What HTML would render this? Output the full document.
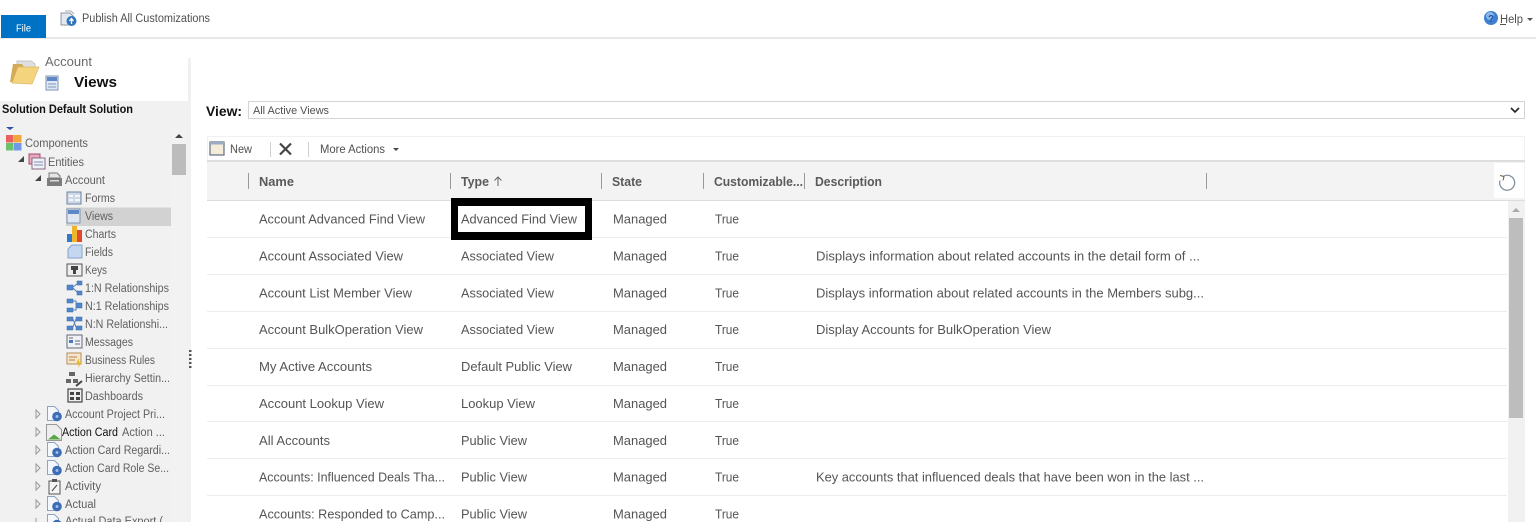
<!DOCTYPE html>
<html><head><meta charset="utf-8"><style>
html,body{margin:0;padding:0;background:#fff;overflow:hidden;width:1536px;height:522px}
svg{display:block;filter:blur(.35px)}
text{font-family:"Liberation Sans",sans-serif;font-size:12.5px;fill:#505050}
.t text{fill:#555}
.h text{font-weight:bold;fill:#5a5a5a;font-size:12.5px}
.n text{font-size:11.5px;fill:#606060}
</style></head><body>
<svg width="1536" height="522" viewBox="0 0 1536 522" xmlns="http://www.w3.org/2000/svg">
<!-- top bar -->
<rect x="0" y="37" width="1536" height="2" fill="#e8e8e8"/>
<rect x="1" y="15" width="45" height="23" fill="#0072c6"/>
<text x="16" y="31.500" textLength="15" lengthAdjust="spacingAndGlyphs" style="fill:#fff;font-size:10.500px">File</text>
<path d="M61 13h9l4 4v8H61z" fill="#e4e8ee" stroke="#8c98a6"/><path d="M65 11h6l3 3" fill="none" stroke="#a5aeb9"/>
<circle cx="71.500" cy="21" r="5" fill="#2f75bb"/><path d="M71.500 24v-5M69.500 21l2-2.500 2 2.500" stroke="#fff" stroke-width="1.300" fill="none"/>
<text x="82" y="22" textLength="128" lengthAdjust="spacingAndGlyphs" style="font-size:11.500px;fill:#505050">Publish All Customizations</text>
<circle cx="1491" cy="18" r="7" fill="#3f7fd0"/><circle cx="1490" cy="16" r="4" fill="#8db7e8"/><text x="1488" y="22" style="font-size:10px;font-weight:bold;fill:#1f4f9c">?</text>
<text x="1500" y="23" textLength="23" lengthAdjust="spacingAndGlyphs" style="font-size:11.500px;fill:#505050">Help</text>
<rect x="1500" y="24" width="6" height="1" fill="#555"/>
<path d="M1527 18h6l-3 3z" fill="#555"/>

<!-- left panel -->
<rect x="188" y="58" width="3" height="43" fill="#f0f0f0"/>
<rect x="0" y="101" width="191" height="421" fill="#f1f1f1"/>
<rect x="171" y="126" width="16" height="396" fill="#f2f2f2"/>
<path d="M175 138h8l-4-4z" fill="#444"/>
<rect x="172" y="144" width="14" height="31" fill="#bcbcbc"/>
<g fill="#555"><rect x="189" y="350" width="2.500" height="2"/><rect x="189" y="354" width="2.500" height="2"/><rect x="189" y="358" width="2.500" height="2"/><rect x="189" y="362" width="2.500" height="2"/><rect x="189" y="366" width="2.500" height="2"/></g>
<!-- folder -->
<path d="M17 61h14l4 3v12H17z" fill="#e0e0e0" stroke="#c4c4c4"/>
<path d="M10 82l3-18h9l2 3h4l-1 15z" fill="#d3aa55"/>
<path d="M12 83l6-16h21l-7 17z" fill="#f5d47e" stroke="#dcb864" stroke-width=".7"/>
<text x="45" y="66" textLength="47" lengthAdjust="spacingAndGlyphs" style="font-size:12.500px;fill:#6a6a6a">Account</text>
<rect x="46" y="76" width="12" height="14" fill="#dfe7f2" stroke="#7f95b5"/><rect x="47" y="77" width="10" height="4" fill="#5d88c4"/>
<path d="M48 84h8M48 87h8" stroke="#7f95b5"/>
<text x="74" y="87" textLength="43" lengthAdjust="spacingAndGlyphs" style="font-size:15px;font-weight:bold;fill:#111">Views</text>
<text x="2" y="113" textLength="131" lengthAdjust="spacingAndGlyphs" style="font-size:11.500px;font-weight:bold;fill:#111">Solution Default Solution</text>

<!-- tree -->
<path d="M6 127h8l-4 3z" fill="#2a4fa5"/>
<rect x="6" y="135" width="7.500" height="7.500" fill="#ea5f5f"/><rect x="14" y="135" width="7.500" height="7.500" fill="#f0a63c"/>
<rect x="6" y="143" width="7.500" height="7.500" fill="#6cc06c"/><rect x="14" y="143" width="7.500" height="7.500" fill="#6f9be6"/>
<path d="M24 156l-6 6h6z" fill="#444"/>
<rect x="29" y="154" width="11" height="10" fill="#e8a8bd" stroke="#a34a6c"/><rect x="32" y="158" width="13" height="11" fill="#eef1f6" stroke="#8c6a84"/><path d="M34 162h9M34 165h9" stroke="#7f8fb0"/>
<path d="M41 175l-6 6h6z" fill="#444"/>
<path d="M49 178v-5h8l3 3v2z" fill="#e6e6e6" stroke="#777"/><rect x="47" y="178" width="15" height="8" fill="#7c7c7c"/><rect x="50" y="180" width="9" height="1.500" fill="#ddd"/>

<rect x="66" y="207.500" width="105" height="18.500" fill="#d2d2d2"/>
<g class="n">
<text x="25" y="147" textLength="63" lengthAdjust="spacingAndGlyphs">Components</text>
<text x="48" y="166" textLength="36" lengthAdjust="spacingAndGlyphs">Entities</text>
<text x="65" y="184" textLength="40" lengthAdjust="spacingAndGlyphs">Account</text>
<text x="85" y="202" textLength="30" lengthAdjust="spacingAndGlyphs">Forms</text>
<text x="85" y="220" textLength="28" lengthAdjust="spacingAndGlyphs">Views</text>
<text x="85" y="238" textLength="31" lengthAdjust="spacingAndGlyphs">Charts</text>
<text x="85" y="256" textLength="28" lengthAdjust="spacingAndGlyphs">Fields</text>
<text x="85" y="274" textLength="22" lengthAdjust="spacingAndGlyphs">Keys</text>
<text x="85" y="292" textLength="84" lengthAdjust="spacingAndGlyphs">1:N Relationships</text>
<text x="85" y="310" textLength="84" lengthAdjust="spacingAndGlyphs">N:1 Relationships</text>
<text x="85" y="328" textLength="83" lengthAdjust="spacingAndGlyphs">N:N Relationshi...</text>
<text x="85" y="346" textLength="48" lengthAdjust="spacingAndGlyphs">Messages</text>
<text x="85" y="364" textLength="70" lengthAdjust="spacingAndGlyphs">Business Rules</text>
<text x="85" y="382" textLength="85" lengthAdjust="spacingAndGlyphs">Hierarchy Settin...</text>
<text x="85" y="400" textLength="58" lengthAdjust="spacingAndGlyphs">Dashboards</text>
<text x="65" y="418" textLength="100" lengthAdjust="spacingAndGlyphs">Account Project Pri...</text>
<text x="62" y="436" textLength="56" lengthAdjust="spacingAndGlyphs" style="fill:#111">Action Card</text>
<text x="122" y="436" textLength="43" lengthAdjust="spacingAndGlyphs">Action ...</text>
<text x="65" y="454" textLength="105" lengthAdjust="spacingAndGlyphs">Action Card Regardi...</text>
<text x="65" y="472" textLength="104" lengthAdjust="spacingAndGlyphs">Action Card Role Se...</text>
<text x="65" y="490" textLength="36" lengthAdjust="spacingAndGlyphs">Activity</text>
<text x="65" y="508" textLength="31" lengthAdjust="spacingAndGlyphs">Actual</text>
<text x="65" y="525" textLength="98" lengthAdjust="spacingAndGlyphs">Actual Data Export (</text>
</g>
<!-- tree icons -->
<rect x="67" y="192" width="14" height="12" fill="#cfd8e6" stroke="#6d85a8"/><path d="M69 196h4M75 196h5M69 200h4M75 200h5" stroke="#fff" stroke-width="1.500"/>
<rect x="67" y="209" width="13" height="14" fill="#dfe7f2" stroke="#7f95b5"/><rect x="68" y="210" width="11" height="4" fill="#5d88c4"/>
<rect x="67" y="234" width="5" height="8" fill="#2f7ac6"/><rect x="72" y="226" width="5" height="16" fill="#f0b429"/><rect x="77" y="230" width="5" height="12" fill="#e2492c"/>
<path d="M68 249l4-4h10v13H68z" fill="#c5d6ef" stroke="#88a3cc"/>
<rect x="67" y="264" width="15" height="12" fill="#eee" stroke="#555"/><path d="M71 266h7v4h-2v4h-3v-4h-2z" fill="#444"/>
<g fill="#4f86cc" stroke="#3c6aa8" stroke-width=".5">
<rect x="67" y="285" width="6" height="5"/><rect x="77" y="281" width="5" height="4"/><rect x="77" y="291" width="5" height="4"/>
<rect x="67" y="299" width="6" height="4"/><rect x="67" y="308" width="6" height="4"/><rect x="76" y="303" width="6" height="5"/>
<rect x="67" y="317" width="6" height="4"/><rect x="76" y="317" width="6" height="4"/><rect x="67" y="326" width="6" height="4"/><rect x="76" y="326" width="6" height="4"/>
</g>
<path d="M73 287l4-3M73 288l4 4M73 301h3v4M73 310h3v-4M73 319l3 8M76 319l-3 8" stroke="#5a7fb0" fill="none"/>
<rect x="67" y="335" width="15" height="13" fill="#eef1f6" stroke="#667"/><path d="M69 338h4M75 341h5M75 344h5" stroke="#667"/><rect x="69" y="340" width="4" height="3" fill="#4a78b8"/>
<rect x="67" y="353" width="14" height="11" fill="#f3e6cf" stroke="#b98a55"/><path d="M69 357h8M69 360h6" stroke="#c27a3b"/><path d="M79 358l-3 6h3l-1 4 4-6h-3z" fill="#e5b92c"/>
<rect x="69" y="372" width="6" height="4" fill="#666"/><rect x="66" y="379" width="5" height="4" fill="#666"/><rect x="73" y="379" width="5" height="4" fill="#666"/><path d="M76 386l6-5" stroke="#444" stroke-width="2"/>
<rect x="68" y="389" width="14" height="13" fill="#eee" stroke="#444" stroke-width="1.200"/><path d="M70 392h4v3h-4zM76 392h4v3h-4zM70 397h4v3h-4zM76 397h4v3h-4z" fill="#444"/>
<g fill="none" stroke="#999"><path d="M36 410v8l4-4zM36 428v8l4-4zM36 446v8l4-4zM36 464v8l4-4zM36 482v8l4-4zM36 500v8l4-4zM36 518v8"/></g>
<g>
<path d="M47.500 406.500h7l4 4v10h-11z" fill="#f4f7fb" stroke="#8fa3c2"/><circle cx="57" cy="416.500" r="4.800" fill="#3c6cb4"/><circle cx="57" cy="416.500" r="1.500" fill="#9fbbe4"/>
<path d="M46.500 424.500h10l5 5v11h-15z" fill="#eee" stroke="#999"/><path d="M48 439.500l6-5 7 5z" fill="#5aa845"/>
<path d="M47.500 442.500h7l4 4v10h-11z" fill="#f4f7fb" stroke="#8fa3c2"/><circle cx="57" cy="452.500" r="4.800" fill="#3c6cb4"/><circle cx="57" cy="452.500" r="1.500" fill="#9fbbe4"/>
<path d="M47.500 460.500h7l4 4v10h-11z" fill="#f4f7fb" stroke="#8fa3c2"/><circle cx="57" cy="470.500" r="4.800" fill="#3c6cb4"/><circle cx="57" cy="470.500" r="1.500" fill="#9fbbe4"/>
<rect x="49" y="481" width="11" height="13" fill="#f4f4f4" stroke="#555"/><rect x="52" y="479" width="5" height="3" fill="#555"/><path d="M52 491l5-6" stroke="#444"/>
<path d="M47.500 496.500h7l4 4v10h-11z" fill="#f4f7fb" stroke="#8fa3c2"/><circle cx="57" cy="506.500" r="4.800" fill="#3c6cb4"/><circle cx="57" cy="506.500" r="1.500" fill="#9fbbe4"/>
<path d="M47.500 514.500h7l4 4v10h-11z" fill="#f4f7fb" stroke="#8fa3c2"/><circle cx="57" cy="524.500" r="4.800" fill="#3c6cb4"/>
</g>

<!-- view selector -->
<text x="206" y="116" textLength="36" lengthAdjust="spacingAndGlyphs" style="font-size:14px;font-weight:bold;fill:#111">View:</text>
<rect x="248.500" y="101.500" width="1276" height="17" fill="#fff" stroke="#d4d4d4"/>
<text x="253" y="114" textLength="76" lengthAdjust="spacingAndGlyphs" style="font-size:11px;fill:#505050">All Active Views</text>
<path d="M1511 108l4 4 4-4" fill="none" stroke="#222" stroke-width="1.600"/>

<!-- toolbar -->
<rect x="207.500" y="136.500" width="1317" height="25" fill="#fff" stroke="#f0f0f0"/>
<rect x="210" y="142" width="14" height="13" fill="#f3ecd8" stroke="#5f6f85" stroke-width="1.200"/><rect x="210" y="142" width="14" height="2.500" fill="#9aacc2"/>
<text x="230" y="153" textLength="22" lengthAdjust="spacingAndGlyphs" style="font-size:11.500px;fill:#505050">New</text>
<rect x="270" y="142" width="1" height="15" fill="#d0d0d0"/>
<path d="M280 143.500l11 11M291 143.500l-11 11" stroke="#444" stroke-width="2.200"/>
<rect x="308" y="142" width="1" height="15" fill="#d0d0d0"/>
<text x="320" y="153" textLength="65" lengthAdjust="spacingAndGlyphs" style="font-size:11.500px;fill:#505050">More Actions</text>
<path d="M393 148h6l-3 3z" fill="#444"/>

<!-- header -->
<rect x="207" y="160" width="1318" height="2" fill="#dedede"/>
<rect x="207" y="162" width="1318" height="38" fill="#f3f3f3"/>
<rect x="207" y="200" width="1318" height="1" fill="#dcdcdc"/>
<rect x="1494" y="163" width="30" height="35" fill="#fff"/>
<path d="M1503 176.500a7.500 7.500 0 1 1-3 4" fill="none" stroke="#7d8a99" stroke-width="1.200"/><path d="M1500 175.500l4 1-1 4" fill="none" stroke="#7a5a3a"/>
<g fill="#999">
<rect x="248" y="173" width="1" height="16"/><rect x="450" y="173" width="1" height="16"/><rect x="601" y="173" width="1" height="16"/><rect x="703" y="173" width="1" height="16"/><rect x="804" y="173" width="1" height="16"/><rect x="1206" y="173" width="1" height="16"/>
</g>
<g class="h">
<text x="259" y="186" textLength="35" lengthAdjust="spacingAndGlyphs">Name</text>
<text x="461" y="186" textLength="28" lengthAdjust="spacingAndGlyphs">Type</text>
<text x="612" y="186" textLength="30" lengthAdjust="spacingAndGlyphs">State</text>
<text x="714" y="186" textLength="89" lengthAdjust="spacingAndGlyphs">Customizable...</text>
<text x="815" y="186" textLength="67" lengthAdjust="spacingAndGlyphs">Description</text>
</g>
<path d="M498 186v-9M494.500 180.500l3.500-3.500 3.500 3.500" fill="none" stroke="#666" stroke-width="1"/>

<!-- row lines -->
<g fill="#ececec">
<rect x="207" y="237" width="1300" height="1"/><rect x="207" y="274" width="1300" height="1"/><rect x="207" y="311" width="1300" height="1"/><rect x="207" y="348" width="1300" height="1"/><rect x="207" y="385" width="1300" height="1"/><rect x="207" y="421" width="1300" height="1"/><rect x="207" y="458" width="1300" height="1"/><rect x="207" y="495" width="1300" height="1"/>
</g>
<!-- scrollbar -->
<rect x="1508" y="201" width="17" height="321" fill="#f1f1f1"/>
<path d="M1512 212h8l-4-4z" fill="#aaa"/>
<rect x="1509" y="218" width="14" height="200" fill="#bdbdbd"/>
<!-- highlight -->
<rect x="451" y="198" width="141" height="42" fill="#000"/>
<rect x="458" y="206" width="127" height="26" fill="#fff"/>

<g class="t">
<text x="259" y="223.500" textLength="166" lengthAdjust="spacingAndGlyphs">Account Advanced Find View</text>
<text x="461" y="223.500" textLength="116" lengthAdjust="spacingAndGlyphs">Advanced Find View</text>
<text x="613" y="223.500" textLength="54" lengthAdjust="spacingAndGlyphs">Managed</text>
<text x="715" y="223.500" textLength="24" lengthAdjust="spacingAndGlyphs">True</text>

<text x="259" y="260.500" textLength="144" lengthAdjust="spacingAndGlyphs">Account Associated View</text>
<text x="461" y="260.500" textLength="93" lengthAdjust="spacingAndGlyphs">Associated View</text>
<text x="613" y="260.500" textLength="54" lengthAdjust="spacingAndGlyphs">Managed</text>
<text x="715" y="260.500" textLength="24" lengthAdjust="spacingAndGlyphs">True</text>
<text x="816" y="260.500" textLength="384" lengthAdjust="spacingAndGlyphs">Displays information about related accounts in the detail form of ...</text>

<text x="259" y="297.500" textLength="153" lengthAdjust="spacingAndGlyphs">Account List Member View</text>
<text x="461" y="297.500" textLength="93" lengthAdjust="spacingAndGlyphs">Associated View</text>
<text x="613" y="297.500" textLength="54" lengthAdjust="spacingAndGlyphs">Managed</text>
<text x="715" y="297.500" textLength="24" lengthAdjust="spacingAndGlyphs">True</text>
<text x="816" y="297.500" textLength="388" lengthAdjust="spacingAndGlyphs">Displays information about related accounts in the Members subg...</text>

<text x="259" y="334" textLength="164" lengthAdjust="spacingAndGlyphs">Account BulkOperation View</text>
<text x="461" y="334" textLength="93" lengthAdjust="spacingAndGlyphs">Associated View</text>
<text x="613" y="334" textLength="54" lengthAdjust="spacingAndGlyphs">Managed</text>
<text x="715" y="334" textLength="24" lengthAdjust="spacingAndGlyphs">True</text>
<text x="816" y="334" textLength="235" lengthAdjust="spacingAndGlyphs">Display Accounts for BulkOperation View</text>

<text x="259" y="371" textLength="113" lengthAdjust="spacingAndGlyphs">My Active Accounts</text>
<text x="461" y="371" textLength="111" lengthAdjust="spacingAndGlyphs">Default Public View</text>
<text x="613" y="371" textLength="54" lengthAdjust="spacingAndGlyphs">Managed</text>
<text x="715" y="371" textLength="24" lengthAdjust="spacingAndGlyphs">True</text>

<text x="259" y="408" textLength="125" lengthAdjust="spacingAndGlyphs">Account Lookup View</text>
<text x="461" y="408" textLength="74" lengthAdjust="spacingAndGlyphs">Lookup View</text>
<text x="613" y="408" textLength="54" lengthAdjust="spacingAndGlyphs">Managed</text>
<text x="715" y="408" textLength="24" lengthAdjust="spacingAndGlyphs">True</text>

<text x="259" y="445" textLength="71" lengthAdjust="spacingAndGlyphs">All Accounts</text>
<text x="461" y="445" textLength="66" lengthAdjust="spacingAndGlyphs">Public View</text>
<text x="613" y="445" textLength="54" lengthAdjust="spacingAndGlyphs">Managed</text>
<text x="715" y="445" textLength="24" lengthAdjust="spacingAndGlyphs">True</text>

<text x="259" y="481.500" textLength="186" lengthAdjust="spacingAndGlyphs">Accounts: Influenced Deals Tha...</text>
<text x="461" y="481.500" textLength="66" lengthAdjust="spacingAndGlyphs">Public View</text>
<text x="613" y="481.500" textLength="54" lengthAdjust="spacingAndGlyphs">Managed</text>
<text x="715" y="481.500" textLength="24" lengthAdjust="spacingAndGlyphs">True</text>
<text x="816" y="481.500" textLength="388" lengthAdjust="spacingAndGlyphs">Key accounts that influenced deals that have been won in the last ...</text>

<text x="259" y="518.500" textLength="186" lengthAdjust="spacingAndGlyphs">Accounts: Responded to Camp...</text>
<text x="461" y="518.500" textLength="66" lengthAdjust="spacingAndGlyphs">Public View</text>
<text x="613" y="518.500" textLength="54" lengthAdjust="spacingAndGlyphs">Managed</text>
<text x="715" y="518.500" textLength="24" lengthAdjust="spacingAndGlyphs">True</text>
</g>
</svg>
</body></html>
